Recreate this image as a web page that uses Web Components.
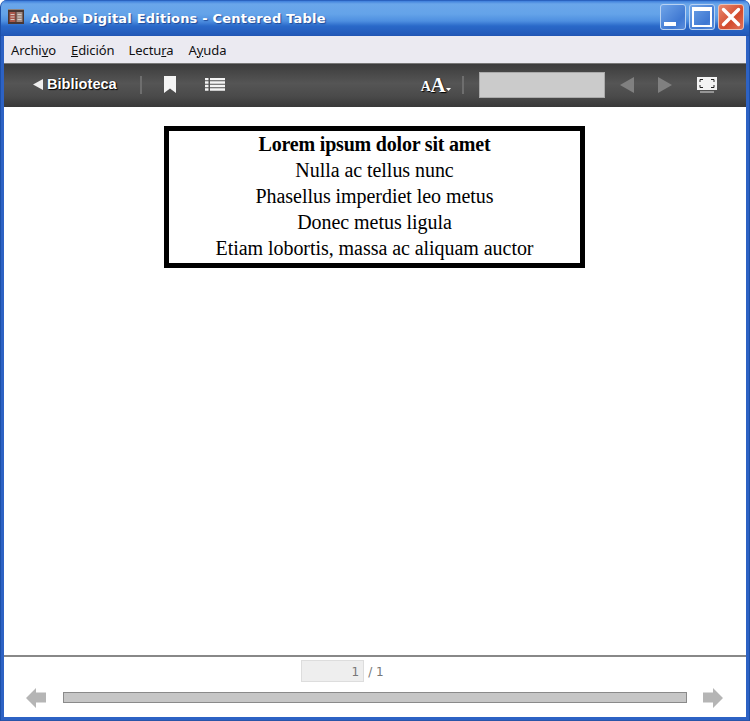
<!DOCTYPE html>
<html lang="es"><head><meta charset="utf-8"><title>Adobe Digital Editions</title>
<style>
html,body{margin:0;padding:0;height:721px;width:750px;overflow:hidden;background:#fff}
</style></head><body>
<ade-window>
  <ade-titlebar slot="title">Adobe Digital Editions - Centered Table</ade-titlebar>
  <ade-menu slot="menu"></ade-menu>
  <ade-toolbar slot="toolbar"></ade-toolbar>
  <ade-page>
    <ade-table>
      <b>Lorem ipsum dolor sit amet</b>
      <span>Nulla ac tellus nunc</span>
      <span>Phasellus imperdiet leo metus</span>
      <span>Donec metus ligula</span>
      <span>Etiam lobortis, massa ac aliquam auctor</span>
    </ade-table>
  </ade-page>
  <ade-pager slot="footer"></ade-pager>
</ade-window>
<script>
function def(name, html){
  customElements.define(name, class extends HTMLElement{
    constructor(){super();this.attachShadow({mode:'open'}).innerHTML=html;}
  });
}
def('ade-window',`<style>
:host{display:flex;flex-direction:column;width:750px;height:721px;box-sizing:border-box;
 background:#2d62c4;border-radius:7px 7px 0 0;overflow:hidden;
 padding:0 3px 3px 3px;border-left:1px solid #1c4fa8;border-right:1px solid #1c4fa8;border-bottom:1px solid #2a55a8;}
main{flex:1;background:#fff;min-height:0;display:block}
</style><slot name="title"></slot><slot name="menu"></slot><slot name="toolbar"></slot><main><slot></slot></main><slot name="footer"></slot>`);
def('ade-titlebar',`<style>
:host{display:flex;align-items:center;height:36px;margin:0 -4px;padding:0 6px 0 8px;box-sizing:border-box;
 background:linear-gradient(#3f80dc 0,#6aa6ea 3px,#64a3e9 13px,#4e8fe0 20px,#2a69c9 25px,#2359b8 34px,#1f4ea8 36px);
 border-top:1px solid #2a62c0;font:bold 13px "DejaVu Sans",sans-serif;color:#fff;text-shadow:1px 1px 1px #1f4a98;}
.ico{width:16px;height:15px;margin-right:6px;flex:none;margin-top:-4px;display:block}
.t{flex:1;white-space:nowrap;margin-top:-1px;letter-spacing:.2px}
.btns{display:flex;gap:3px;margin-top:-4px}
.b{width:26px;height:26px;box-sizing:border-box;border:1px solid #b9d2f2;border-radius:3px;display:block;background:linear-gradient(135deg,#6fa4e8,#3f78d2 70%,#5a8edc)}
.c{background:linear-gradient(135deg,#e88a70,#d34a2c 60%,#e0735c);border-color:#e9c0b4}
svg{display:block}
</style>
<svg class="ico" viewBox="0 0 16 15" width="16" height="15"><rect width="16" height="15" fill="#4a3733"/><rect x="0" y="0" width="16" height="1" fill="#8c8480"/><rect x="1.500" y="3" width="6" height="10" fill="#a9584c"/><rect x="8.500" y="3" width="6" height="10" fill="#a08a82"/><path d="M2.500 5.500h4M2.500 8h4M2.500 10.500h4M9.500 5.500h4M9.500 8h4M9.500 10.500h4" stroke="#dcd6d0" stroke-width=".9"/></svg>
<span class="t"><slot></slot></span>
<span class="btns">
<span class="b"><svg width="24" height="24"><rect x="3" y="17" width="12" height="4" fill="#fff"/></svg></span>
<span class="b"><svg width="24" height="24"><path d="M3 3h18v18H3z" fill="none" stroke="#fff" stroke-width="2"/><rect x="2" y="2" width="20" height="4" fill="#fff"/></svg></span>
<span class="b c"><svg width="24" height="24"><path d="M4.500 4.500l15 15M19.500 4.500l-15 15" stroke="#fff" stroke-width="3.400" stroke-linecap="round"/></svg></span>
</span>`);
def('ade-menu',`<style>
:host{display:flex;align-items:center;height:27px;background:#ebeaf1;box-sizing:border-box;padding:0 0 0 7px;
 font:13px "Noto Sans",sans-serif;color:#111;letter-spacing:-.08px}
u{text-underline-offset:1px}
</style><span>Archi<u>v</u>o</span><span style="margin-left:15px"><u>E</u>dición</span><span style="margin-left:14px">Lectu<u>r</u>a</span><span style="margin-left:15px">A<u>y</u>uda</span>`);
def('ade-toolbar',`<style>
:host{display:flex;align-items:center;height:44px;box-sizing:border-box;background:linear-gradient(#3c3c3c,#555 45%,#4a4a4a 75%,#383838);
 color:#fff;padding:0 0 2px 29px;border-top:1px solid #777}
svg{display:block;flex:none}
.bib{font:bold 14.600px "Liberation Sans",sans-serif;display:flex;align-items:center;gap:4px;margin-top:-1px;text-shadow:1px 1px 1px #000,0 0 1px #000}
.sep{width:2px;height:18px;background:#6e6e6e;flex:none}
.field{width:126px;height:26px;box-sizing:border-box;background:#cbcbcb;border:1px solid #aaa;flex:none}
.a{font:bold 21px "Liberation Serif",serif;display:flex;align-items:flex-end;letter-spacing:-.5px;color:#fff;text-shadow:1px 1px 1px #000;line-height:20px}
.a small{font-size:14px;line-height:17px}
</style>
<span class="bib"><svg width="10" height="11"><path d="M10 0v11L0 5.500z" fill="#eee"/></svg>Biblioteca</span>
<span class="sep" style="margin-left:23px"></span>
<svg width="12" height="17" style="margin-left:22px"><path d="M0 0h12v17L6 12.500 0 17z" fill="#f4f4f4"/></svg>
<svg width="20" height="14" style="margin-left:29px"><path d="M0 1h3.500M5 1h15M0 4.500h3.500M5 4.500h15M0 8h3.500M5 8h15M0 11.500h3.500M5 11.500h15" stroke="#f4f4f4" stroke-width="2.500" fill="none"/></svg>
<span class="a" style="margin-left:196px"><small>A</small>A</span>
<svg width="5" height="3" style="margin-left:1px;margin-top:10px"><path d="M0 0h5L2.500 3z" fill="#fff"/></svg>
<span class="sep" style="margin-left:11px"></span>
<span class="field" style="margin-left:15px"></span>
<svg width="14" height="16" style="margin-left:15px"><path d="M14 0v16L0 8z" fill="#808080"/></svg>
<svg width="14" height="16" style="margin-left:24px"><path d="M0 0v16l14-8z" fill="#808080"/></svg>
<svg width="20" height="16" style="margin-left:25px"><rect width="20" height="13" fill="#f4f4f4"/><path d="M3 5V2.500h3M14 2.500h3V5M3 8v2.500h3M14 10.500h3V8" stroke="#222" fill="none"/><path d="M3 15h14" stroke="#ddd" stroke-width="1"/></svg>`);
def('ade-page',`<style>:host{display:flex;justify-content:center;padding:19px 0 0 0;box-sizing:border-box;height:100%}</style><slot></slot>`);
def('ade-table',`<style>
:host{display:flex;flex-direction:column;align-items:center;box-sizing:border-box;width:421px;height:142px;border:5px solid #000;margin-right:1px;
 font:20px/26px "Liberation Serif",serif;color:#000;letter-spacing:-.05px}
::slotted(b){letter-spacing:-.2px}
</style><slot></slot>`);
def('ade-pager',`<style>
:host{display:block;height:62px;box-sizing:border-box;border-top:2px solid #888;background:#fff;font:12px "DejaVu Sans",sans-serif;color:#777}
.top{display:flex;justify-content:center;align-items:center;gap:4px;padding-top:3px;margin-right:65px}
.in{width:63px;height:22px;box-sizing:border-box;background:#eee;border:1px solid #ddd;text-align:right;padding-right:4px;line-height:22px}
.top>span:last-child{padding-top:2px}
.bot{display:flex;align-items:center;padding:6px 0 0 22px}
.track{flex:none;width:624px;height:11px;box-sizing:border-box;background:#c6c6c6;border:1px solid #8a8a8a;margin:0 16px 1px 17px}
svg{display:block;flex:none}
</style>
<div class="top"><span class="in">1</span><span>/ 1</span></div>
<div class="bot">
<svg width="20" height="20"><path d="M20 4.500v10H10V20L0 10 10 0v4.500z" fill="#b5b5b5"/></svg>
<span class="track"></span>
<svg width="20" height="20"><path d="M0 4.500v10h10V20l10-10L10 0v4.500z" fill="#b5b5b5"/></svg>
</div>`);
</script>
</body></html>
